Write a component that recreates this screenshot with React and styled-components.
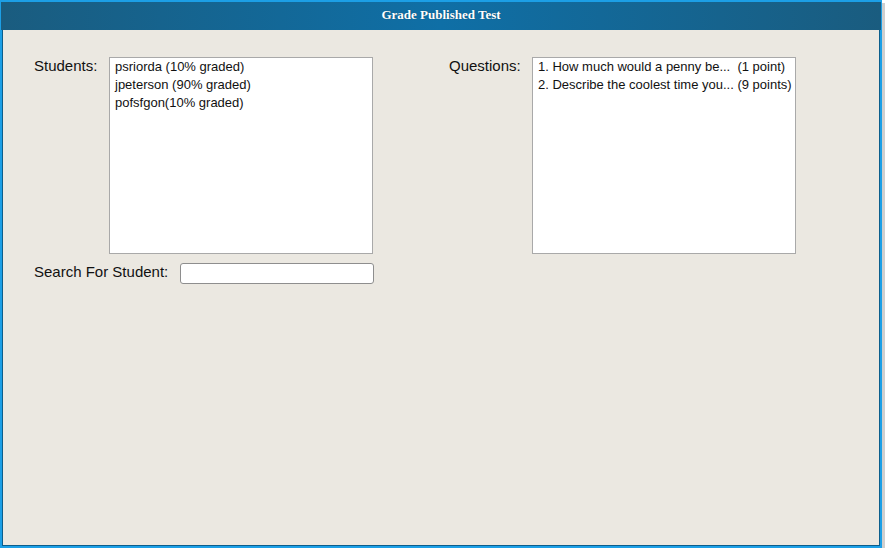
import styled, { createGlobalStyle } from 'styled-components';

const GlobalStyle = createGlobalStyle`
  html, body {
    margin: 0;
    padding: 0;
    background: #ffffff;
  }
  * {
    box-sizing: border-box;
  }
`;

const Frame = styled.div`
  width: 882px;
  height: 548px;
  border: 2px solid #1c9fe6;
  box-shadow: inset 0 0 0 1px #0b5e8c, 3px 3px 0 #cfcfcf;
  background: #ebe8e1;
  display: flex;
  flex-direction: column;
  font-family: "Liberation Sans", Arial, sans-serif;
  font-size: 13px;
  color: #111;
`;

const TitleBar = styled.div`
  height: 28px;
  margin: 0 -1px;
  background: linear-gradient(to right, #1a5c7f 0%, #0f6fa6 50%, #1a5c7f 100%);
  display: flex;
  align-items: center;
  justify-content: center;
  padding-bottom: 2px;
  color: #ffffff;
  font-family: "Liberation Serif", "Times New Roman", serif;
  font-weight: bold;
  font-size: 13px;
  text-shadow: 0 0 1px rgba(0, 0, 0, 0.4);
`;

const Body = styled.div`
  flex: 1;
  display: flex;
  gap: 75px;
  padding: 27px 0 0 32px;
`;

const Column = styled.div`
  display: flex;
  flex-direction: column;
  gap: 9px;
`;

const Row = styled.div`
  display: flex;
  align-items: flex-start;
`;

const Label = styled.div`
  width: ${p => p.$width}px;
  padding-top: ${p => p.$top || 0}px;
  font-size: 15px;
  line-height: 16px;
`;

const ListBox = styled.div`
  width: 264px;
  height: 197px;
  background: #ffffff;
  border: 1px solid #a9a9a9;
  padding: 0 0 0 5px;
  display: flex;
  flex-direction: column;
`;

const Item = styled.div`
  line-height: 18px;
  font-size: 13px;
  white-space: ${p => (p.$pre ? 'pre' : 'nowrap')};
`;

const SearchInput = styled.input`
  width: 194px;
  height: 21px;
  border: 1px solid #8e8e8e;
  border-radius: 3px;
  background: #ffffff;
  font-family: inherit;
  font-size: 13px;
  padding: 0 4px;
  outline: none;
`;

const students = [
  'psriorda (10% graded)',
  'jpeterson (90% graded)',
  'pofsfgon(10% graded)',
];

const questions = [
  '1. How much would a penny be...  (1 point)',
  '2. Describe the coolest time you... (9 points)',
];

export default function App() {
  return (
    <>
      <GlobalStyle />
      <Frame>
        <TitleBar>Grade Published Test</TitleBar>
        <Body>
          <Column>
            <Row>
              <Label $width={75} $top={1}>Students:</Label>
              <ListBox>
                {students.map(s => <Item key={s}>{s}</Item>)}
              </ListBox>
            </Row>
            <Row>
              <Label $width={146} $top={1}>Search For Student:</Label>
              <SearchInput type="text" />
            </Row>
          </Column>
          <Column>
            <Row>
              <Label $width={83} $top={1}>Questions:</Label>
              <ListBox>
                {questions.map(q => <Item key={q} $pre>{q}</Item>)}
              </ListBox>
            </Row>
          </Column>
        </Body>
      </Frame>
    </>
  );
}
